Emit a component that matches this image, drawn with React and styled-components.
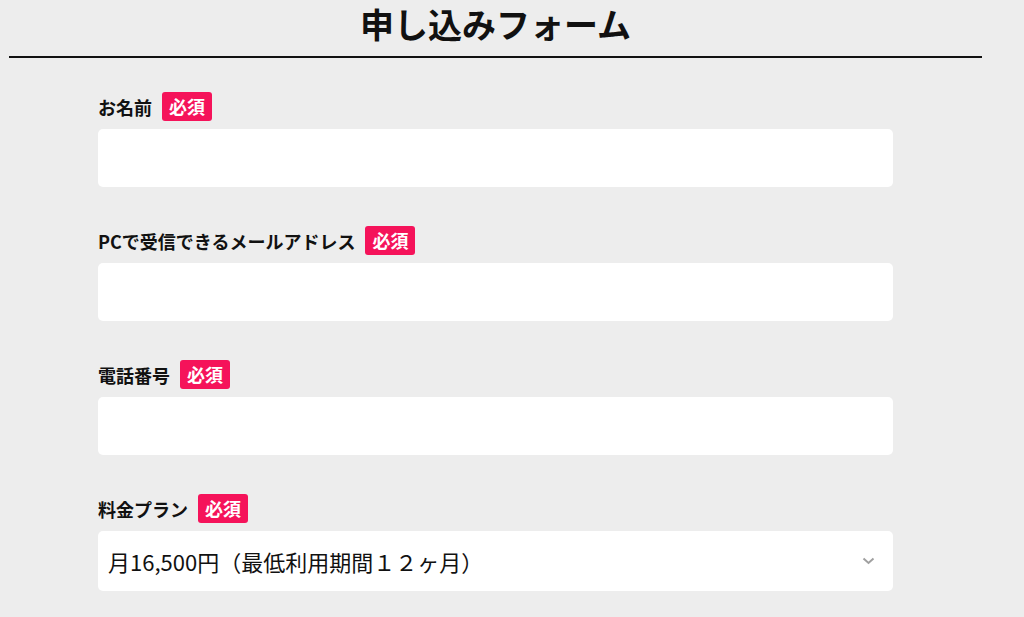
import styled, { createGlobalStyle } from "styled-components"

const GlobalStyle = createGlobalStyle`
    html, body {
        margin : 0;
        padding : 0;
        background-color : #ededed;
        font-family : "Noto Sans CJK JP", "Noto Sans", sans-serif;
        color : #111;
    }
`

const Page = styled.div`
    width : 973px;
    margin-left : 9px;
`

const Title = styled.h1`
    margin : 0;
    padding-bottom : 8px;
    font-size : 34px;
    line-height : 48px;
    font-weight : 700;
    text-align : center;
    border-bottom : 2px solid #111;
`

const Form = styled.form`
    width : 795px;
    margin : 34px auto 0;
    display : flex;
    flex-direction : column;
    gap : 39px;
`

const Field = styled.div`
    display : flex;
    flex-direction : column;
    gap : 8px;
`

const LabelRow = styled.div`
    display : flex;
    align-items : center;
    gap : 10px;
    height : 29px;
`

const Label = styled.label`
    font-size : 18px;
    font-weight : 700;
`

const Required = styled.span`
    background-color : #f5135a;
    color : white;
    font-size : 18px;
    font-weight : 700;
    line-height : 29px;
    padding : 0 7px;
    border-radius : 3px;
`

const Input = styled.input`
    box-sizing : border-box;
    height : 58px;
    border : none;
    border-radius : 5px;
    background-color : white;
    padding : 0 10px;
    font-size : 20px;
    font-family : inherit;
    outline : none;
`

const SelectBox = styled.div`
    height : 60px;
    border-radius : 5px;
    background-color : white;
    display : flex;
    align-items : center;
    justify-content : space-between;
    padding : 0 18px 0 10px;
    font-size : 22px;
`

const Chevron = () => (
    <svg width="13" height="8" viewBox="0 0 13 8">
        <path d="M1.5 1.5 L6.5 6 L11.5 1.5" fill="none" stroke="#a0a0a0" strokeWidth="2" />
    </svg>
)

const fields = [
    "お名前",
    "PCで受信できるメールアドレス",
    "電話番号",
]

const App = () => {
    return (
        <Page>
            <GlobalStyle />
            <Title>申し込みフォーム</Title>
            <Form>
                {fields.map((f) => (
                    <Field key={f}>
                        <LabelRow>
                            <Label>{f}</Label>
                            <Required>必須</Required>
                        </LabelRow>
                        <Input />
                    </Field>
                ))}
                <Field>
                    <LabelRow>
                        <Label>料金プラン</Label>
                        <Required>必須</Required>
                    </LabelRow>
                    <SelectBox>
                        <span>月16,500円（最低利用期間１２ヶ月）</span>
                        <Chevron />
                    </SelectBox>
                </Field>
            </Form>
        </Page>
    )
}

export default App
